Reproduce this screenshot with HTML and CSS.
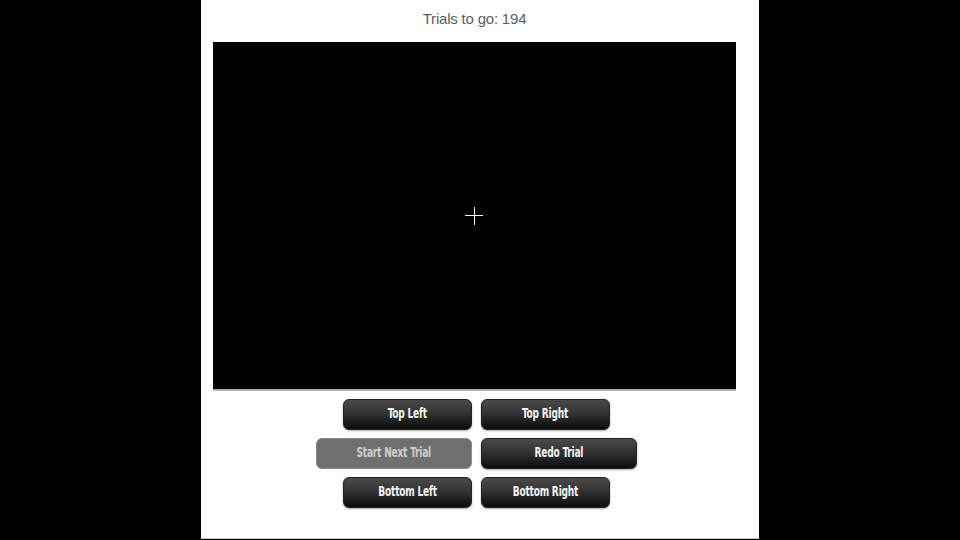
FILE: index.html
```html
<!DOCTYPE html>
<html>
<head>
<meta charset="utf-8">
<link rel="stylesheet" href="styles.css">
</head>
<body>
<div class="panel">
  <div class="title">Trials to go: 194</div>
  <div class="stage">
    <div class="cross"></div>
  </div>
  <div class="controls">
    <button class="btn left"><span class="lbl">Top Left</span></button>
    <button class="btn right"><span class="lbl">Top Right</span></button>
    <button class="btn wide left disabled"><span class="lbl">Start Next Trial</span></button>
    <button class="btn wide right"><span class="lbl">Redo Trial</span></button>
    <button class="btn left"><span class="lbl">Bottom Left</span></button>
    <button class="btn right"><span class="lbl">Bottom Right</span></button>
  </div>
</div>
</body>
</html>
```
FILE: styles.css
```css
html, body {
  margin: 0;
  padding: 0;
  background: #000;
  height: 540px;
  overflow: hidden;
}
.panel {
  width: 558px;
  height: 539px;
  margin: 0 auto;
  background: #fff;
  border-bottom: 1px solid #c8c8c8;
  display: flex;
  flex-direction: column;
  padding: 0 23px 0 12px;
  box-sizing: border-box;
}
.title {
  height: 42px;
  line-height: 38px;
  text-align: center;
  font-family: "Liberation Sans", Arial, sans-serif;
  font-size: 15px;
  color: #5e5e5e;
  font-weight: normal;
  letter-spacing: -0.2px;
}
.stage {
  width: 523px;
  height: 349px;
  background: #000;
  border-bottom: 2px solid #b0b0b0;
  box-sizing: border-box;
  position: relative;
  flex: none;
}
.cross {
  position: absolute;
  left: 252px;
  top: 165px;
  width: 18px;
  height: 18px;
}
.cross::before, .cross::after {
  content: "";
  position: absolute;
  background: #fff;
}
.cross::before {
  left: 0;
  top: 8px;
  width: 18px;
  height: 1px;
}
.cross::after {
  left: 9px;
  top: 0;
  width: 1px;
  height: 18px;
}
.controls {
  display: grid;
  grid-template-columns: 156px 156px;
  column-gap: 9px;
  row-gap: 8px;
  margin-top: 8px;
  margin-left: 103px;
}
.btn {
  height: 31px;
  width: 129px;
  border: 1px solid #222;
  border-radius: 6px;
  background: linear-gradient(#4a4a4a, #333 45%, #0c0c0c);
  color: #f4f4f4;
  font-family: "DejaVu Sans Condensed", "DejaVu Sans", sans-serif;
  font-stretch: condensed;
  font-weight: bold;
  font-size: 14px;
  box-shadow: 0 1px 2px rgba(0,0,0,0.35);
  padding: 0 0 3px 0;
  box-sizing: border-box;
  display: flex;
  align-items: center;
  justify-content: center;
  overflow: hidden;
}
.lbl {
  display: inline-block;
  transform: scaleX(0.72);
  white-space: nowrap;
  letter-spacing: -0.3px;
}
.btn.left { justify-self: end; }
.btn.right { justify-self: start; }
.btn.wide { width: 156px; }
.btn.disabled {
  background: #6f6f6f;
  border-color: #8a8a8a;
  color: #cfcfcf;
  box-shadow: none;
}
```
